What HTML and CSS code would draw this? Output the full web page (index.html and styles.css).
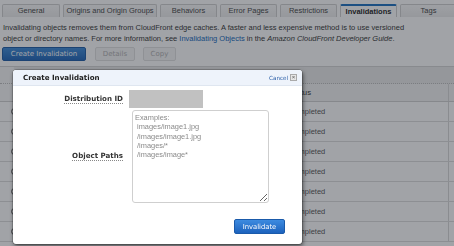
FILE: index.html
```html
<!DOCTYPE html>
<html>
<head>
<meta charset="utf-8">
<link rel="stylesheet" href="styles.css">
</head>
<body>
<div class="page">
  <div class="tabs">
    <div class="tab">General</div>
    <div class="tab">Origins and Origin Groups</div>
    <div class="tab">Behaviors</div>
    <div class="tab">Error Pages</div>
    <div class="tab">Restrictions</div>
    <div class="tab active">Invalidations</div>
    <div class="tab">Tags</div>
  </div>
  <p class="desc">Invalidating objects removes them from CloudFront edge caches. A faster and less expensive method is to use versioned object or directory names. For more information, see <a href="#">Invalidating Objects</a> in the <i>Amazon CloudFront Developer Guide</i>.</p>
  <div class="actions">
    <button class="btn primary">Create Invalidation</button>
    <button class="btn disabled">Details</button>
    <button class="btn disabled">Copy</button>
  </div>
  <div class="table">
    <div class="toolbar"></div>
    <div class="row head"><span class="sel"></span><span class="status">Status</span></div>
    <div class="row"><span class="sel"><i class="radio"></i></span><span class="status">Completed</span></div>
    <div class="row"><span class="sel"><i class="radio"></i></span><span class="status">Completed</span></div>
    <div class="row"><span class="sel"><i class="radio"></i></span><span class="status">Completed</span></div>
    <div class="row"><span class="sel"><i class="radio"></i></span><span class="status">Completed</span></div>
    <div class="row"><span class="sel"><i class="radio"></i></span><span class="status">Completed</span></div>
    <div class="row"><span class="sel"><i class="radio"></i></span><span class="status">Completed</span></div>
    <div class="row"><span class="sel"><i class="radio"></i></span><span class="status">Completed</span></div>
  </div>
</div>
<div class="overlay"></div>
<div class="dialog">
  <div class="dlg-head">
    <span class="dlg-title">Create Invalidation</span>
    <span class="dlg-cancel"><a href="#">Cancel</a><span class="xbox">×</span></span>
  </div>
  <div class="dlg-body">
    <label class="lbl"><span>Distribution ID</span></label>
    <div class="redacted"></div>
    <label class="lbl"><span>Object Paths</span></label>
    <textarea class="paths" placeholder="Examples:&#10; images/image1.jpg&#10; /images/image1.jpg&#10; /images/*&#10; /images/image*"></textarea>
  </div>
  <div class="dlg-foot">
    <button class="btn go">Invalidate</button>
  </div>
</div>
</body>
</html>
```
FILE: styles.css
```css
html, body {
  margin: 0;
  padding: 0;
  background: #ffffff;
  width: 454px;
  height: 246px;
  overflow: hidden;
}
body {
  font-family: "Liberation Sans", Arial, sans-serif;
  font-size: 7.5px;
  color: #333;
}
.page {
  padding: 4px 0 0 2px;
}
.tabs {
  display: grid;
  grid-template-columns: 58px 94px 57px 57px 57px 57px 57px;
  column-gap: 3px;
}
.tab {
  height: 13px;
  box-sizing: border-box;
  border: 1px solid #cfcfcf;
  border-bottom: none;
  border-radius: 2px 2px 0 0;
  background: linear-gradient(#fafafa, #ececec);
  color: #444;
  text-align: center;
  line-height: 12px;
}
.tab.active {
  background: #fff;
  border-top: 2px solid #1a6fc0;
  font-weight: bold;
  color: #222;
  line-height: 11px;
}
.desc {
  margin: 6px 0 0 1px;
  line-height: 10.5px;
  width: 410px;
  color: #333;
}
.desc a {
  color: #1166bb;
  text-decoration: none;
}
.actions {
  display: flex;
  gap: 9px;
  margin-top: 3px;
}
.btn {
  height: 14px;
  box-sizing: border-box;
  padding: 0;
  font-family: "DejaVu Sans", Verdana, sans-serif;
  font-size: 7px;
  border-radius: 2px;
  border: 1px solid #ccc;
}
.btn.primary {
  width: 84px;
  background: linear-gradient(#3c8ad8, #1e64b8);
  border-color: #1b5aa6;
  color: #fff;
}
.btn.disabled {
  background: #f6f6f6;
  border-color: #e0e0e0;
  color: #b0b0b0;
}
.btn.disabled:nth-child(2) { width: 40px; }
.btn.disabled:nth-child(3) { width: 33px; margin-left: -1px; }
.table {
  margin: 5px 0 0 -2px;
  border-top: 1px solid #d5d5d5;
}
.toolbar {
  height: 16px;
  background: linear-gradient(90deg, #f7f7f7 0 14px, #ebebeb 14px);
  border-bottom: 1px dotted #bdbdbd;
}
.row {
  height: 20px;
  box-sizing: border-box;
  border-bottom: 1px solid #dcdcdc;
  display: flex;
  align-items: center;
}
.row.head {
  height: 18px;
  background: #f3f3f3;
  border-bottom: 1px solid #d0d0d0;
}
.row.head .status {
  color: #333;
  font-size: 7.8px;
}
.sel {
  width: 289px;
  display: flex;
  align-items: center;
  padding-left: 11px;
  box-sizing: border-box;
  height: 100%;
}
.row.head .sel {
  background: #f8f8f8;
}
.radio {
  width: 7px;
  height: 7px;
  box-sizing: border-box;
  border: 1px solid #555;
  border-radius: 50%;
}
.status {
  color: #555;
  flex: 1;
  height: 100%;
  display: flex;
  align-items: center;
  border-right: 1px solid #d8d8d8;
  margin-right: 5px;
}
.overlay {
  position: fixed;
  inset: 0;
  background: rgba(30, 36, 46, 0.42);
}
.dialog {
  position: absolute;
  left: 13px;
  top: 70px;
  width: 289px;
  height: 174px;
  box-sizing: border-box;
  background: #fff;
  border-radius: 3px;
  box-shadow: 0 0 0 0.5px rgba(0, 0, 0, 0.35), 1px 2px 4px rgba(0, 0, 0, 0.55);
  display: flex;
  flex-direction: column;
}
.dlg-head {
  height: 16px;
  box-sizing: border-box;
  background: #eef3fb;
  border-bottom: 1px solid #dfe6f0;
  border-radius: 3px 3px 0 0;
  display: flex;
  align-items: center;
  justify-content: space-between;
  padding: 0 5px 0 10px;
}
.dlg-title {
  font-family: "DejaVu Sans", Verdana, sans-serif;
  font-weight: bold;
  font-size: 7.1px;
  color: #222;
}
.dlg-cancel {
  display: flex;
  align-items: center;
  gap: 2px;
}
.dlg-cancel a {
  font-size: 5.6px;
  color: #2a5ea8;
  text-decoration: none;
  font-family: "DejaVu Sans", Verdana, sans-serif;
}
.xbox {
  width: 7px;
  height: 7px;
  box-sizing: border-box;
  border: 1px solid #aaa;
  background: #e6e6e6;
  color: #555;
  font-size: 6px;
  line-height: 5px;
  text-align: center;
}
.dlg-body {
  display: grid;
  grid-template-columns: 110px 140px;
  grid-template-rows: 18px 93px;
  column-gap: 6px;
  row-gap: 2px;
  padding-top: 4px;
}
.lbl {
  display: flex;
  align-items: center;
  justify-content: flex-end;
  font-family: "DejaVu Sans", Verdana, sans-serif;
  font-weight: bold;
  font-size: 7.1px;
  color: #333;
}
.lbl span {
  border-bottom: 1px dotted #888;
  line-height: 8px;
}
.redacted {
  width: 74px;
  height: 18px;
  background: #c1c1c1;
}
.paths {
  margin: 0 0 0 3px;
  width: 137px;
  height: 93px;
  box-sizing: border-box;
  border: 1px solid #cfcfcf;
  border-radius: 3px;
  padding: 2px 2px;
  font-family: "Liberation Sans", Arial, sans-serif;
  font-size: 7.4px;
  line-height: 9.3px;
  resize: both;
  outline: none;
}
.paths::placeholder {
  color: #8a8a8a;
}
.dlg-foot {
  display: flex;
  justify-content: flex-end;
  padding: 16px 17px 0 0;
}
.btn.go {
  width: 51px;
  height: 15px;
  background: linear-gradient(#3d8be0, #1c62bd);
  border-color: #1a5aaa;
  color: #fff;
  font-size: 6.8px;
}
```
